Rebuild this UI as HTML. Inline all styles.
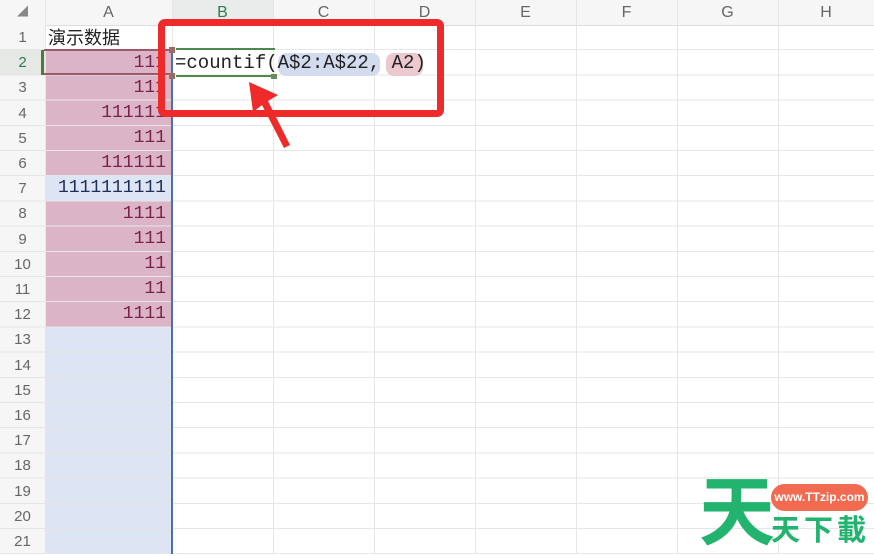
<!DOCTYPE html>
<html><head><meta charset="utf-8"><style>
body{margin:0;width:874px;height:554px;overflow:hidden;background:#fff;position:relative;font-family:"Liberation Sans","Noto Sans CJK SC",sans-serif}
.a{position:absolute}
.hl{position:absolute;left:0;top:25px;width:874px;height:529px;background:repeating-linear-gradient(to bottom,transparent 0 24.2px,#e6e6e6 24.2px 25.2px)}
.vl{position:absolute;top:0;width:1px;height:554px;background:#e6e6e6}
.ch{position:absolute;top:0;height:25px;line-height:25px;text-align:center;color:#666;font-size:16px}
.rh{position:absolute;left:0;width:45px;height:25.2px;line-height:25px;text-align:center;color:#666;font-size:15px}
.n{position:absolute;right:708px;font-family:"Liberation Mono",monospace;font-size:18px;color:#7a2348;line-height:25px}
</style></head><body>
<div class="a" style="left:0;top:0;width:874px;height:25px;background:#f6f6f6;border-bottom:1px solid #ddd"></div>
<div class="a" style="left:0;top:0;width:45px;height:554px;background:#f6f6f6;border-right:1px solid #ddd"></div>
<div class="a" style="left:172px;top:0;width:101px;height:25px;background:#e9ecea"></div>
<div class="a" style="left:0;top:50.2px;width:45px;height:25.2px;background:#e6e8e6"></div>
<div class="a" style="left:45px;top:50.2px;width:127px;height:277.2px;background:#dcb4c7"></div>
<div class="a" style="left:45px;top:176.2px;width:127px;height:25.2px;background:#dde4f3"></div>
<div class="a" style="left:45px;top:327.4px;width:127px;height:227px;background:#dde4f3"></div>
<div class="hl"></div>
<div class="vl" style="left:45px"></div><div class="vl" style="left:172px"></div><div class="vl" style="left:273px"></div><div class="vl" style="left:374px"></div><div class="vl" style="left:475px"></div><div class="vl" style="left:576px"></div><div class="vl" style="left:677px"></div><div class="vl" style="left:778px"></div>
<div class="a" style="left:171px;top:50px;width:2px;height:504px;background:#4a6fb5"></div>
<div class="ch" style="left:0;width:45px;font-size:11px;color:#888">◢</div>
<div class="ch" style="left:45px;width:127px">A</div>
<div class="ch" style="left:172px;width:101px;color:#2e7d52">B</div>
<div class="ch" style="left:273px;width:101px">C</div>
<div class="ch" style="left:374px;width:101px">D</div>
<div class="ch" style="left:475px;width:101px">E</div>
<div class="ch" style="left:576px;width:101px">F</div>
<div class="ch" style="left:677px;width:101px">G</div>
<div class="ch" style="left:778px;width:96px">H</div>
<div class="rh" style="top:25px">1</div><div class="rh" style="top:50.2px;color:#2e7d52">2</div><div class="rh" style="top:75.4px">3</div><div class="rh" style="top:100.6px">4</div><div class="rh" style="top:125.8px">5</div><div class="rh" style="top:151px">6</div><div class="rh" style="top:176.2px">7</div><div class="rh" style="top:201.4px">8</div><div class="rh" style="top:226.6px">9</div><div class="rh" style="top:251.8px">10</div><div class="rh" style="top:277px">11</div><div class="rh" style="top:302.2px">12</div><div class="rh" style="top:327.4px">13</div><div class="rh" style="top:352.6px">14</div><div class="rh" style="top:377.8px">15</div><div class="rh" style="top:403px">16</div><div class="rh" style="top:428.2px">17</div><div class="rh" style="top:453.4px">18</div><div class="rh" style="top:478.6px">19</div><div class="rh" style="top:503.8px">20</div><div class="rh" style="top:529px">21</div>
<div class="a" style="left:48px;top:26px;font-size:18px;line-height:25px;color:#222">演示数据</div>
<div class="a" style="left:44px;top:49px;width:127px;height:26px;border-top:2px solid #9b5a66;border-bottom:2px solid #9b5a66;box-sizing:border-box"></div>
<div class="a" style="left:41px;top:50px;width:3px;height:25px;background:#4a7a40"></div>
<div class="n" style="top:51px">111</div><div class="n" style="top:76px">111</div><div class="n" style="top:101px">111111</div><div class="n" style="top:126px">111</div><div class="n" style="top:151px">111111</div><div class="n" style="top:176px;color:#1d2d5a">1111111111</div><div class="n" style="top:202px">1111</div><div class="n" style="top:227px">111</div><div class="n" style="top:252px">11</div><div class="n" style="top:277px">11</div><div class="n" style="top:302px">1111</div>
<div class="a" style="left:176px;top:48px;width:99px;height:2px;background:#4a8a4a"></div>
<div class="a" style="left:176px;top:75px;width:99px;height:2px;background:#4a8a4a"></div>
<div class="a" style="left:169px;top:47px;width:6px;height:6px;background:#9b6a60"></div>
<div class="a" style="left:169px;top:73px;width:6px;height:6px;background:#9b6a60"></div>
<div class="a" style="left:271px;top:74px;width:6px;height:5px;background:#6a8a5a"></div>
<div class="a" style="left:278px;top:53px;width:102px;height:23px;background:#d3dbef;border-radius:8px"></div>
<div class="a" style="left:386px;top:53px;width:37px;height:23px;background:#ecc8cf;border-radius:8px"></div>
<div class="a" style="left:175px;top:51px;font-family:'Liberation Mono',monospace;font-size:19px;line-height:25px;color:#222;white-space:pre">=countif(A$2:A$22, A2)</div>
<div class="a" style="left:158px;top:19px;width:286px;height:98px;border:7px solid #ee2a2a;border-radius:7px;box-sizing:border-box"></div>
<svg class="a" style="left:230px;top:75px" width="70" height="80"><polygon points="19,7 48,20 38,26 60,70 54,73 32,30 23,37" fill="#ee2a2a"/></svg>
<div class="a" style="left:699px;top:474px;font-size:76px;line-height:80px;font-weight:bold;color:#22b36e">天</div>
<div class="a" style="left:771px;top:484px;width:97px;height:27px;border-radius:14px;background:#f26a4f;color:#fff;font-size:12px;font-weight:bold;line-height:27px;text-align:center">www.TTzip.com</div>
<div class="a" style="left:771px;top:513px;font-size:29px;line-height:36px;font-weight:bold;color:#22b36e;letter-spacing:4px">天下載</div>
</body></html>
